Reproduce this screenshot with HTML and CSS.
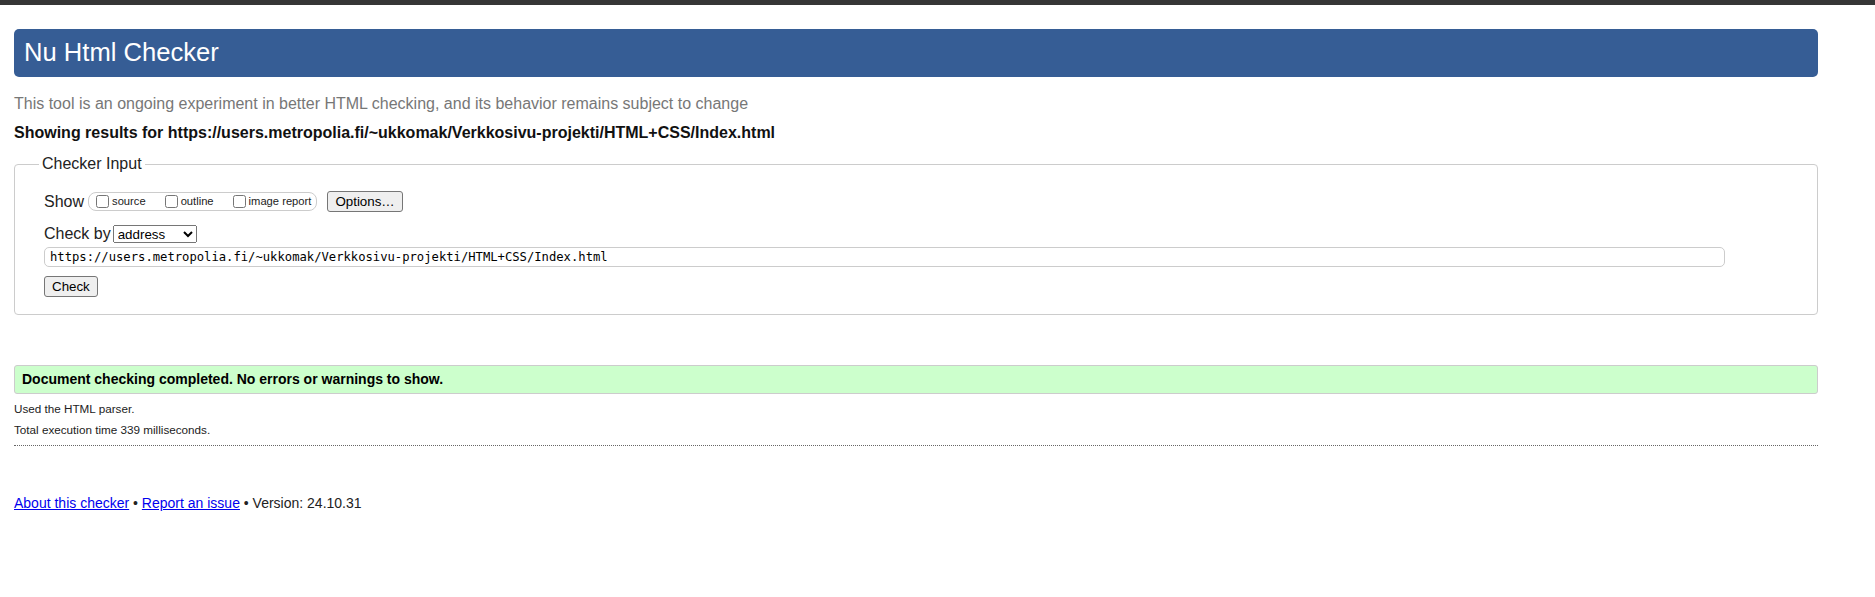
FILE: index.html
```html
<!DOCTYPE html>
<html lang="en">
<head>
<meta charset="utf-8">
<title>Nu Html Checker</title>
<link rel="stylesheet" href="styles.css">
</head>
<body>
<div class="topbar"></div>
<main class="page">
  <h1 class="title">Nu Html Checker</h1>
  <p class="about">This tool is an ongoing experiment in better HTML checking, and its behavior remains subject to change</p>
  <p class="showing">Showing results for https://users.metropolia.fi/~ukkomak/Verkkosivu-projekti/HTML+CSS/Index.html</p>
  <form class="checker">
    <fieldset class="checker-box">
      <legend class="checker-legend">Checker Input</legend>
      <div class="row row-show">
        <span class="label">Show</span>
        <span class="opts">
          <label class="opt"><input class="cb" type="checkbox">source</label>
          <label class="opt"><input class="cb" type="checkbox">outline</label>
          <label class="opt"><input class="cb" type="checkbox">image report</label>
        </span>
        <button type="button" class="btn btn-options">Options…</button>
      </div>
      <div class="row row-by">
        <span class="label">Check by</span>
        <select class="by"><option>address</option></select>
      </div>
      <input class="url" type="text" value="https://users.metropolia.fi/~ukkomak/Verkkosivu-projekti/HTML+CSS/Index.html">
      <div class="row row-check">
        <button type="button" class="btn btn-check">Check</button>
      </div>
    </fieldset>
  </form>
  <p class="success">Document checking completed. No errors or warnings to show.</p>
  <p class="meta">Used the HTML parser.</p>
  <p class="meta">Total execution time 339 milliseconds.</p>
  <hr class="rule">
  <footer class="foot"><a href="#" class="link">About this checker</a> • <a href="#" class="link">Report an issue</a> • Version: 24.10.31</footer>
</main>
</body>
</html>
```

FILE: styles.css
```css
html, body {
  margin: 0;
  padding: 0;
  background: #fff;
}

body {
  font-family: "Liberation Sans", Arial, sans-serif;
  color: #000;
}

.topbar {
  height: 5px;
  background: #363636;
}

.page {
  margin: 0 57px 0 14px;
}

.title {
  margin: 24px 0 0;
  height: 48px;
  box-sizing: border-box;
  padding: 0 0 2px 10px;
  background: #365d95;
  color: #fff;
  font-size: 25.6px;
  font-weight: normal;
  line-height: 46px;
  border-radius: 5px;
}

.about {
  margin: 18px 0 0;
  font-size: 16px;
  line-height: 18px;
  color: #777;
}

.showing {
  margin: 11px 0 0;
  font-size: 16px;
  line-height: 18px;
  font-weight: bold;
  color: #111;
}

.checker {
  margin: 13px 0 0;
}

.checker-box {
  margin: 0;
  min-width: 0;
  border: 1px solid #ccc;
  border-radius: 4px;
  padding: 18px 0 17px 29px;
}

.checker-legend {
  margin-left: -5px;
  padding: 0 3px;
  font-size: 16px;
  line-height: 18px;
  color: #222;
}

.row {
  display: flex;
  align-items: center;
}

.label {
  font-size: 16px;
  line-height: 18px;
  color: #222;
}

.row-show {
  height: 21px;
}

.opts {
  display: inline-flex;
  align-items: center;
  height: 19px;
  box-sizing: border-box;
  margin-left: 4px;
  padding: 0 5px 0 7px;
  border: 1px solid #ccc;
  border-radius: 8px;
}

.opt {
  display: inline-flex;
  align-items: center;
  font-size: 11.2px;
  line-height: 13px;
  color: #222;
}

.opt + .opt {
  margin-left: 19px;
}

.cb {
  width: 13px;
  height: 13px;
  margin: 0 3px 0 0;
}

.btn {
  height: 21px;
  box-sizing: border-box;
  background: #efefef;
  border: 1px solid #767676;
  border-radius: 3px;
  font-family: "Liberation Sans", Arial, sans-serif;
  font-size: 13.33px;
  line-height: 17px;
  color: #000;
}

.btn-options {
  margin-left: 10px;
  padding: 0 7px;
}

.btn-check {
  padding: 0 7px;
}

.row-by {
  margin-top: 13px;
  height: 18px;
}

.by {
  margin-left: 2px;
  width: 84px;
  height: 18px;
  box-sizing: border-box;
  font-family: "Liberation Sans", Arial, sans-serif;
  font-size: 13.33px;
  color: #000;
}

.url {
  display: block;
  margin: 4px 0 0;
  width: 1681px;
  height: 20px;
  box-sizing: border-box;
  padding: 0 5px;
  border: 1px solid #ccc;
  border-radius: 5px;
  font-family: "DejaVu Sans Mono", "Liberation Mono", monospace;
  font-size: 12.2px;
  color: #000;
}

.row-check {
  margin-top: 9px;
}

.success {
  margin: 50px 0 0;
  height: 29px;
  box-sizing: border-box;
  padding: 0 0 0 7px;
  background: #ccffcc;
  border: 1px solid #ccc;
  border-radius: 3px;
  font-size: 14px;
  font-weight: bold;
  line-height: 27px;
  color: #000;
}

.meta {
  margin: 8px 0 0;
  font-size: 11.7px;
  line-height: 14px;
  color: #222;
}

.meta + .meta {
  margin-top: 7px;
}

.rule {
  margin: 8px 0 0;
  height: 0;
  border: 0;
  border-top: 1px dotted #666;
}

.foot {
  margin-top: 49px;
  font-size: 14px;
  line-height: 16px;
  color: #222;
}

.link {
  color: #0000ee;
}
```
